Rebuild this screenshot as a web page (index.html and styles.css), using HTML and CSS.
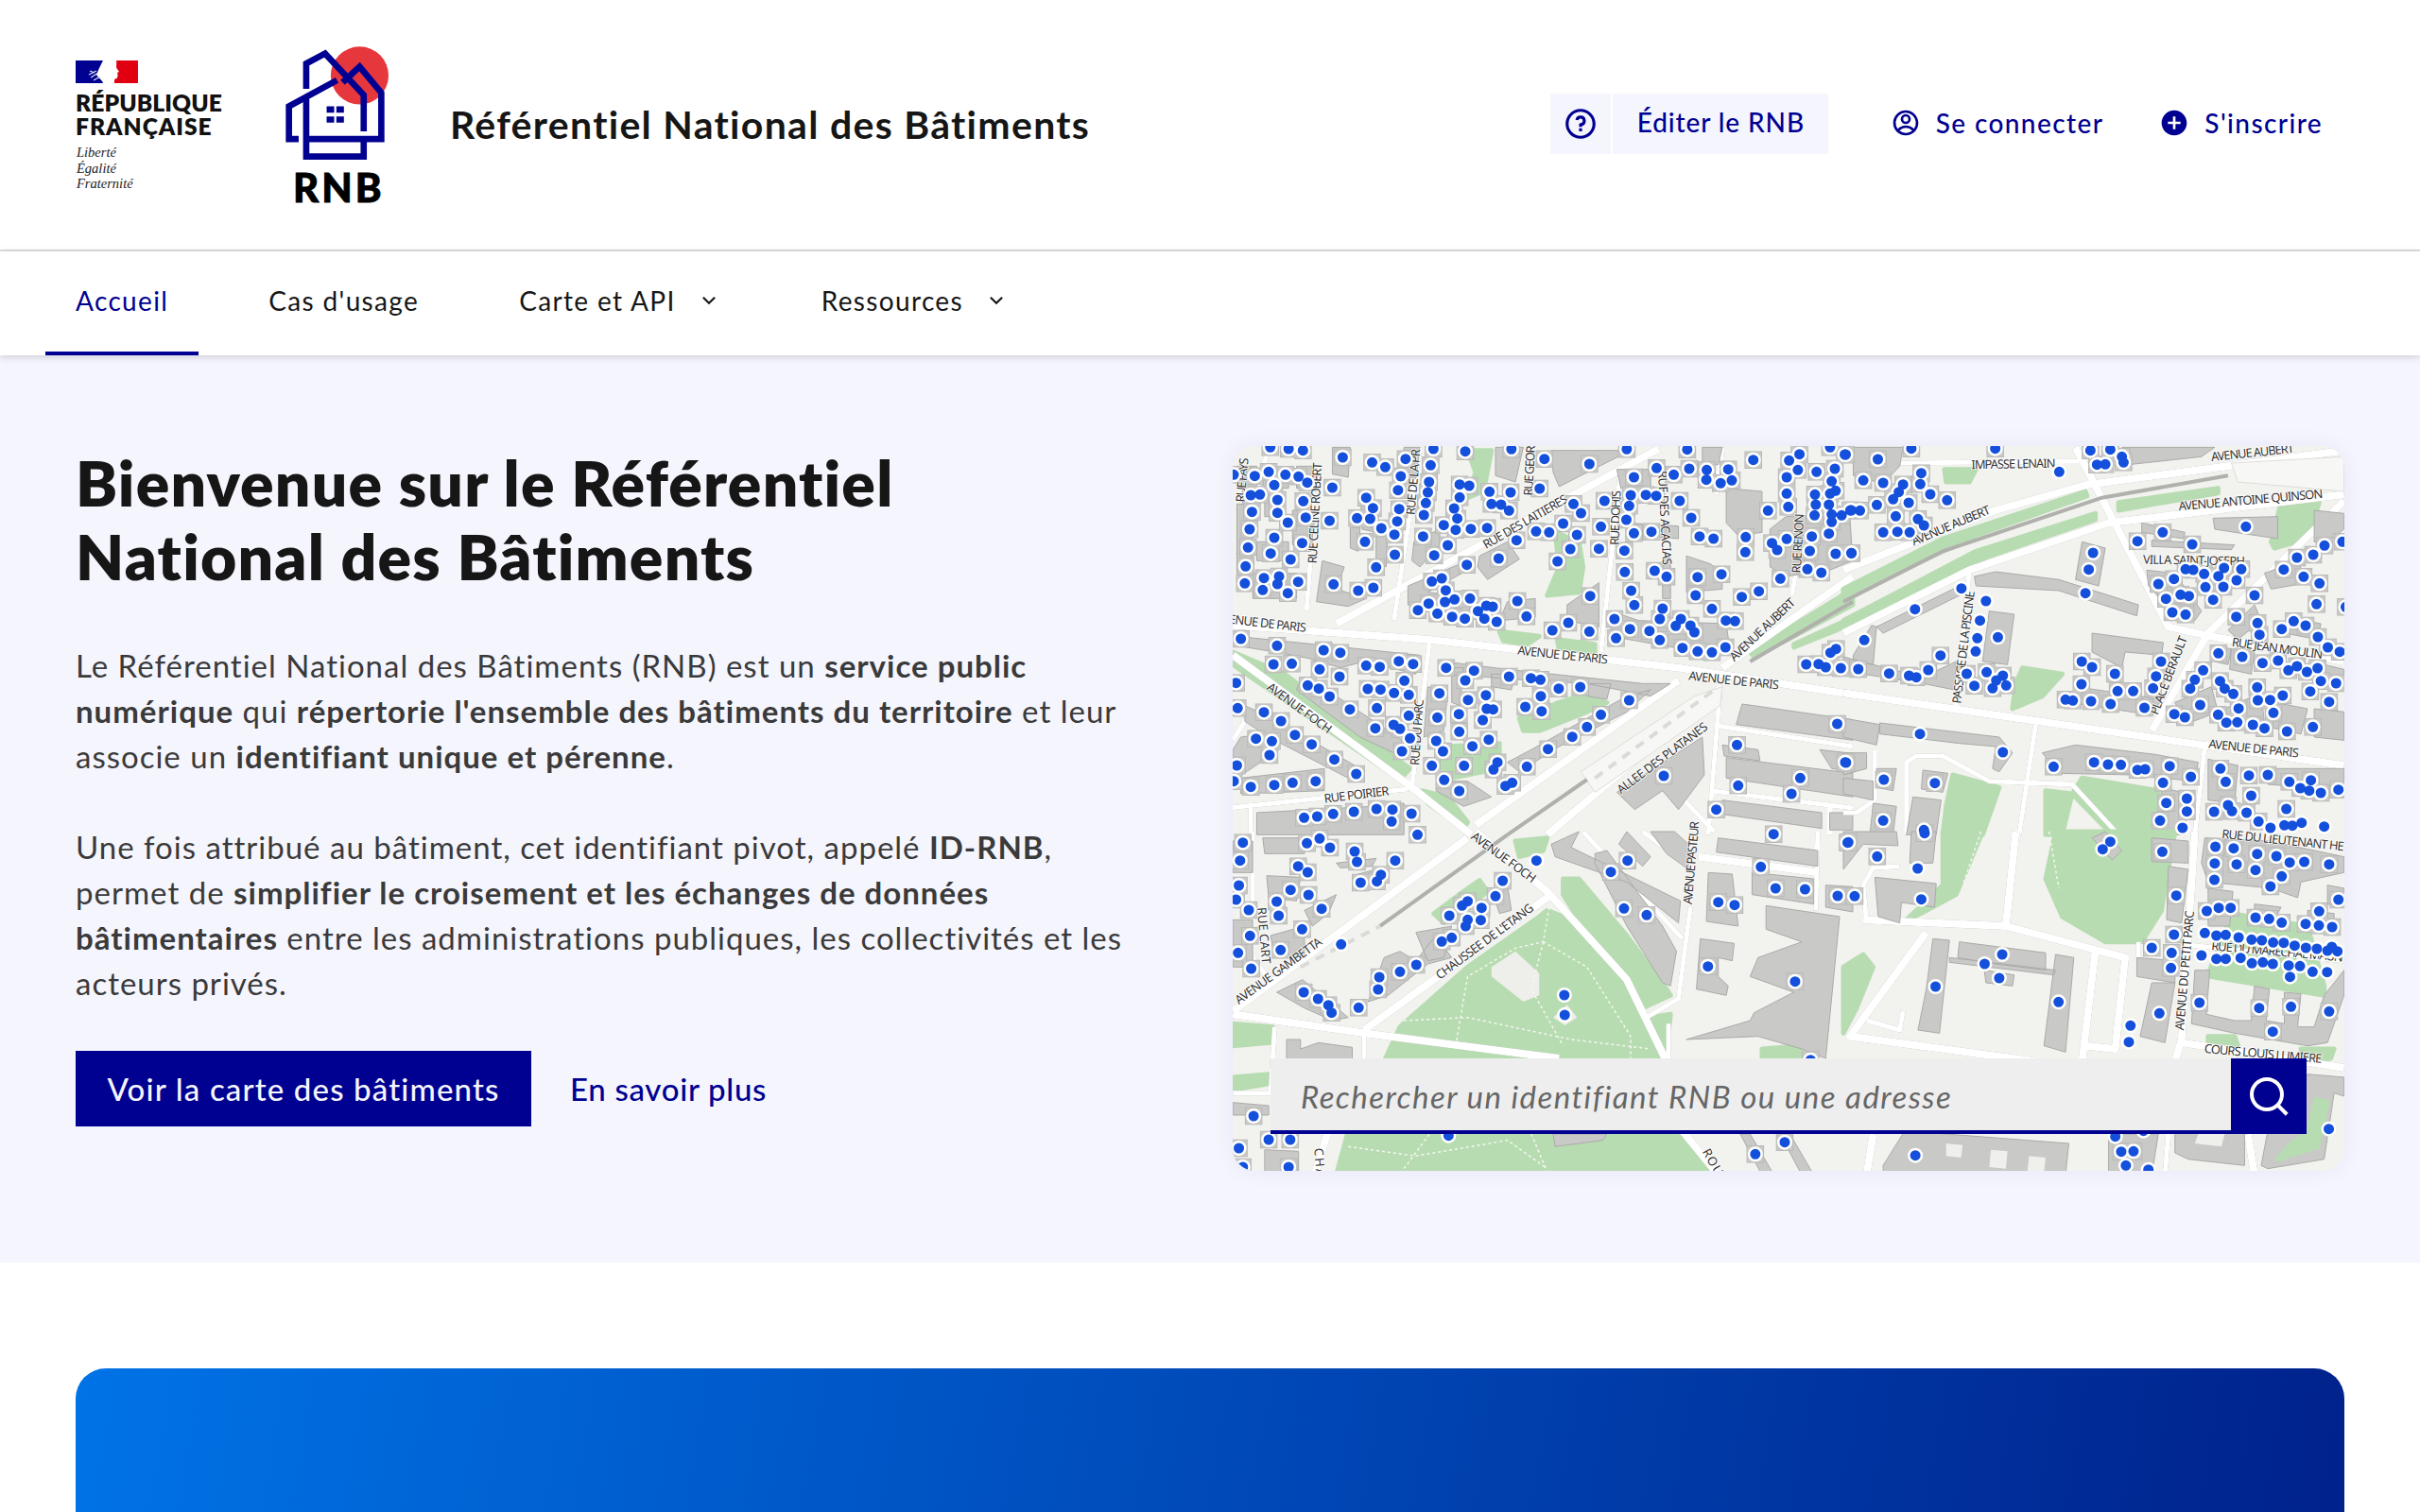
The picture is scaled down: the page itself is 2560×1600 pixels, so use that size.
FILE: index.html
```html
<!DOCTYPE html>
<html lang="fr">
<head>
<meta charset="utf-8">
<title>Référentiel National des Bâtiments</title>
<link rel="stylesheet" href="styles.css">
</head>
<body>
<header class="site-header">
  <div class="brand">
    <div class="republic">
      <svg class="flag" viewBox="0 0 66 24" width="66" height="24" aria-hidden="true">
        <rect width="66" height="24" fill="#fff"/>
        <rect width="29" height="24" fill="#000091"/>
        <rect x="41" width="25" height="24" fill="#e1000f"/>
        <path d="M29 0H43C44 4 42 6 44 9L46 12L44 13C45 16 45 19 41 20C38 21 37 22 36 24H29C28 20 24 19 22 15L25 8Z" fill="#fff"/>
        <path d="M14 15L22 11M16 18L24 13M19 21L26 17M15 11L20 13" stroke="#dfe0f5" stroke-width="1.2" fill="none"/>
      </svg>
      <p class="rf-name">RÉPUBLIQUE<br><span class="rf-second">FRANÇAISE</span></p>
      <p class="rf-motto">Liberté<br>Égalité<br>Fraternité</p>
    </div>
    <div class="rnb">
      <svg class="rnb-mark" viewBox="750 55 340 365" width="113" height="122" aria-hidden="true">
        <circle cx="992" cy="150" r="92" fill="#e5373c"/>
        <g fill="none" stroke="#000091" stroke-width="20" stroke-linejoin="miter">
          <path d="M822 192V112L882 80L1005 212V328"/>
          <path d="M920 165L767 248V352H798"/>
          <path d="M938 172L992 122L1061 205V352H822"/>
          <path d="M822 225V408H1005V352"/>
        </g>
        <path d="M887 248h24v20h-24zM918 248h24v20h-24zM887 280h24v20h-24zM918 280h24v20h-24z" fill="#000091"/>
      </svg>
      <span class="rnb-word">RNB</span>
    </div>
    <p class="site-title">Référentiel National des Bâtiments</p>
  </div>
  <div class="tools">
    <a class="edit"><span class="edit-icon"><svg class="ico-lg" viewBox="0 0 24 24"><path d="M12 22C6.477 22 2 17.523 2 12S6.477 2 12 2s10 4.477 10 10-4.477 10-10 10zm0-2a8 8 0 1 0 0-16 8 8 0 0 0 0 16zm-1-5h2v2h-2v-2zm2-1.645V14h-2v-1.5a1 1 0 0 1 1-1 1.5 1.5 0 1 0-1.471-1.794l-1.962-.393A3.501 3.501 0 1 1 13 13.355z"/></svg></span><span class="edit-text">Éditer le RNB</span></a>
    <a class="tool login"><svg class="ico" viewBox="0 0 24 24"><path d="M12 22C6.477 22 2 17.523 2 12S6.477 2 12 2s10 4.477 10 10-4.477 10-10 10zm-4.987-3.744A7.966 7.966 0 0 0 12 20c1.97 0 3.773-.712 5.167-1.892A6.979 6.979 0 0 0 12.16 16a6.981 6.981 0 0 0-5.147 2.256zM5.616 16.82A8.975 8.975 0 0 1 12.16 14a8.972 8.972 0 0 1 6.362 2.634 8 8 0 1 0-12.906.187zM12 13a4 4 0 1 1 0-8 4 4 0 0 1 0 8zm0-2a2 2 0 1 0 0-4 2 2 0 0 0 0 4z"/></svg>Se connecter</a>
    <a class="tool signup"><svg class="ico" viewBox="0 0 24 24"><path d="M12 22C6.477 22 2 17.523 2 12S6.477 2 12 2s10 4.477 10 10-4.477 10-10 10zm-1-11H7v2h4v4h2v-4h4v-2h-4V7h-2v4z"/></svg>S'inscrire</a>
  </div>
</header>
<nav class="main-nav">
  <a class="nav-item active">Accueil</a>
  <a class="nav-item">Cas d'usage</a>
  <a class="nav-item">Carte et API<svg class="chev" viewBox="0 0 24 24"><path d="M12 13.172l4.95-4.95 1.414 1.414L12 16 5.636 9.636 7.05 8.222z"/></svg></a>
  <a class="nav-item">Ressources<svg class="chev" viewBox="0 0 24 24"><path d="M12 13.172l4.95-4.95 1.414 1.414L12 16 5.636 9.636 7.05 8.222z"/></svg></a>
</nav>
<main>
<section class="hero">
  <div class="hero-text">
    <h1>Bienvenue sur le Référentiel<br>National des Bâtiments</h1>
    <p>Le Référentiel National des Bâtiments (RNB) est un <b>service public<br>numérique</b> qui <b>répertorie l'ensemble des bâtiments du territoire</b> et leur<br>associe un <b>identifiant unique et pérenne</b>.</p>
    <p>Une fois attribué au bâtiment, cet identifiant pivot, appelé <b>ID-RNB</b>,<br>permet de <b>simplifier le croisement et les échanges de données<br>bâtimentaires</b> entre les administrations publiques, les collectivités et les<br>acteurs privés.</p>
    <div class="cta">
      <a class="btn">Voir la carte des bâtiments</a>
      <a class="more">En savoir plus</a>
    </div>
  </div>
  <div class="map">
    <svg class="map-svg" viewBox="0 0 1176 767" width="1176" height="767" aria-hidden="false">
      <defs>
        <path id="da" class="nss" d="M104 40h.1M150 45h.1M186 50h.1M286 72h.1M360 88h.1M393 103h.1M444 77h.1M514 45h.1M507 97h.1M594 53h.1M710 46h.1M793 77h.1M906 93h.1M1000 46h.1M1152 47h.1M1075 106h.1M1118 127h.1M1157 108h.1M1201 112h.1M1255 110h.1M1318 80h.1M1434 62h.1M1408 82h.1M1548 63h.1M1511 40h.1M1430 112h.1M1477 118h.1M1523 108h.1M1402 135h.1M1515 148h.1M12 127h.1M65 131h.1M100 118h.1M142 127h.1M175 133h.1M197 152h.1M114 160h.1M260 168h.1M432 132h.1M503 150h.1M425 176h.1M500 183h.1M580 158h.1M604 162h.1M655 181h.1M708 183h.1M781 171h.1M1018 135h.1M1200 143h.1M1236 154h.1M1264 145h.1M55 192h.1M78 190h.1M122 207h.1M187 211h.1M345 200h.1M495 217h.1M580 199h.1M660 220h.1M684 222h.1M704 241h.1M866 220h.1M944 210h.1M1010 192h.1M1048 191h.1M1074 194h.1M1133 210h.1M1006 226h.1M1402 187h.1M1473 190h.1M1511 187h.1M1525 178h.1M58 245h.1M122 248h.1M362 233h.1M428 236h.1M566 234h.1M885 249h.1M1162 264h.1M1355 241h.1M1406 229h.1M1475 222h.1M1508 222h.1M1562 240h.1M1472 256h.1M1515 253h.1M1540 256h.1M148 279h.1M193 263h.1M253 273h.1M322 265h.1M355 267h.1M423 275h.1M490 255h.1M574 266h.1M999 270h.1M1515 277h.1M52 300h.1M383 297h.1M416 317h.1M540 287h.1M570 302h.1M608 299h.1M649 296h.1M772 307h.1M805 310h.1M840 282h.1M935 292h.1M1018 313h.1M1062 308h.1M1183 323h.1M1218 330h.1M1299 325h.1M1465 323h.1M1402 331h.1M1508 314h.1M114 327h.1M488 323h.1M723 335h.1M875 318h.1M1365 344h.1M184 344h.1M342 340h.1M550 351h.1M48 358h.1M858 363h.1M930 362h.1M994 368h.1M1298 373h.1M1378 366h.1M1460 369h.1M1525 378h.1M1565 376h.1M105 377h.1M417 381h.1M516 383h.1M155 396h.1M678 393h.1M826 402h.1M598 413h.1M1454 427h.1M1489 438h.1M42 418h.1M370 421h.1M995 436h.1M1070 432h.1M1100 451h.1M1178 452h.1M1238 443h.1M1386 457h.1M88 455h.1M126 450h.1M174 467h.1M40 472h.1M122 474h.1M510 466h.1M535 456h.1M263 475h.1M85 493h.1M148 503h.1M325 495h.1M363 486h.1M545 494h.1M1011 495h.1M1332 497h.1M1173 510h.1M1289 515h.1M908 512h.1M502 536h.1M543 531h.1M567 523h.1M606 520h.1M647 543h.1M663 546h.1M725 528h.1M1019 541h.1M1090 552h.1M1214 553h.1M475 557h.1M524 568h.1M561 578h.1M593 584h.1M626 560h.1M642 584h.1M673 594h.1M748 577h.1M853 597h.1M813 621h.1M906 625h.1M969 585h.1M1008 617h.1M1057 623h.1M1083 652h.1M1083 585h.1M1123 607h.1M1136 585h.1M1160 606h.1M1170 627h.1M1249 590h.1M1272 592h.1M973 646h.1M1140 677h.1M1178 688h.1M1214 691h.1M1248 675h.1M30 648h.1M121 670h.1M238 684h.1M280 692h.1M1512 692h.1M1526 680h.1M112 729h.1M158 727h.1M345 733h.1M379 737h.1M427 719h.1M463 728h.1M546 740h.1M616 749h.1M228 745h.1M1451 729h.1M1482 728h.1M1500 738h.1M1538 741h.1M18 788h.1M278 768h.1M198 796h.1M226 806h.1M253 831h.1M441 781h.1M594 780h.1M704 768h.1M759 773h.1M783 778h.1M883 801h.1M829 806h.1M349 807h.1M381 809h.1M415 820h.1M452 826h.1M529 821h.1M646 827h.1M784 830h.1M601 842h.1M1006 843h.1M22 868h.1M88 881h.1M304 872h.1M372 868h.1M131 909h.1M452 892h.1M524 898h.1M578 887h.1M648 870h.1M664 872h.1M745 864h.1M786 878h.1M638 906h.1M935 889h.1M1529 918h.1M368 932h.1M414 921h.1M430 934h.1M166 953h.1M579 943h.1M900 928h.1M863 959h.1M68 965h.1M108 973h.1M455 964h.1M521 972h.1M653 968h.1M208 983h.1M612 989h.1M1277 985h.1M802 998h.1M102 1017h.1M538 1005h.1M435 1005h.1M265 1031h.1M20 1050h.1M675 1040h.1M510 1051h.1M591 1051h.1M665 1063h.1M749 1054h.1M1549 1040h.1M1436 1090h.1M1093 1083h.1M320 1077h.1M12 1100h.1M55 1118h.1M114 1112h.1M160 1105h.1M218 1100h.1M541 1096h.1M712 1105h.1M695 1115h.1M579 1131h.1M1280 1114h.1M1414 1140h.1M1225 1190h.1M189 1216h.1M222 1212h.1M262 1204h.1M314 1197h.1M371 1188h.1M411 1190h.1M459 1203h.1M409 1228h.1"/>
        <path id="dc" class="nss" d="M35 35h.1M196 37h.1M228 22h.1M254 51h.1M474 10h.1M316 63h.1M322 96h.1M418 92h.1M28 92h.1M174 110h.1M198 129h.1M1002 92h.1M960 128h.1M1369 8h.1M1337 112h.1M1555 35h.1M382 137h.1M372 158h.1M331 162h.1M25 171h.1M155 185h.1M200 201h.1M688 156h.1M670 205h.1M1374 180h.1M1448 183h.1M1530 204h.1M1230 224h.1M1271 233h.1M18 216h.1M120 222h.1M50 249h.1M125 267h.1M233 245h.1M600 221h.1M586 235h.1M635 242h.1M554 267h.1M993 244h.1M1050 265h.1M600 280h.1M633 281h.1M595 300h.1M184 310h.1M53 331h.1M560 337h.1M535 349h.1M130 376h.1M23 385h.1M471 423h.1M430 445h.1M378 462h.1M56 435h.1M1204 428h.1M1423 476h.1M188 510h.1M375 501h.1M224 531h.1M250 551h.1M258 575h.1M326 559h.1M62 903h.1M1462 725h.1M100 978h.1M154 978h.1M25 1005h.1M150 1065h.1M1397 986h.1M1323 1024h.1M35 1065h.1"/>
        <path id="dc2" class="nss" d="M843 519h.1M844 582h.1M773 92h.1M282 358h.1M552 965h.1"/>
        <path id="db" class="nss" d="M7 63h.1M205 44h.1M458 44h.1M745 50h.1M805 47h.1M104 78h.1M840 70h.1M845 88h.1M790 94h.1M765 95h.1M235 122h.1M60 145h.1M120 153h.1M180 158h.1M232 157h.1M167 182h.1M262 189h.1M150 205h.1M197 216h.1M313 208h.1M101 223h.1M24 240h.1M50 241h.1M158 259h.1M225 268h.1M243 288h.1M120 310h.1M163 308h.1M200 310h.1M24 376h.1M963 310h.1M887 338h.1M1052 348h.1M1505 340h.1M1451 352h.1M1417 381h.1M1368 390h.1M1328 428h.1M1388 451h.1M1436 472h.1M1032 427h.1M1055 429h.1M1088 442h.1M1131 449h.1M1148 423h.1M1200 427h.1M1186 462h.1M950 474h.1M997 458h.1M1092 484h.1M1146 483h.1M1240 510h.1M1017 508h.1M1042 512h.1M973 521h.1M1115 524h.1M992 564h.1M1032 571h.1M1185 578h.1M1427 538h.1M1515 547h.1M1249 598h.1M1358 592h.1M1394 606h.1M1322 617h.1M1255 635h.1M1431 642h.1M293 701h.1M1461 675h.1M1497 689h.1M1131 694h.1M1203 705h.1M1311 717h.1M1264 725h.1M719 720h.1M958 720h.1M750 738h.1M45 744h.1M1430 741h.1M1368 735h.1M1342 748h.1M1398 753h.1M138 758h.1M256 747h.1M198 765h.1M220 770h.1M372 759h.1M432 754h.1M481 765h.1M461 780h.1M491 796h.1M395 797h.1M450 805h.1M819 759h.1M943 767h.1M1085 748h.1M1060 778h.1M1136 782h.1M1440 782h.1M1486 789h.1M718 792h.1M827 814h.1M874 814h.1M934 805h.1M1046 806h.1M1150 806h.1M1176 823h.1M1248 802h.1M1408 815h.1M1325 828h.1M1250 843h.1M1287 842h.1M1465 848h.1M670 841h.1M692 844h.1M747 846h.1M806 855h.1M908 867h.1M1076 858h.1M1192 869h.1M1297 883h.1M998 887h.1M1030 897h.1M1130 889h.1M1155 914h.1M1188 913h.1M1235 921h.1M1270 932h.1M1338 942h.1M1416 928h.1M8 1041h.1M634 1054h.1M756 1040h.1M798 1047h.1M837 1048h.1M887 1064h.1M910 1062h.1M984 1052h.1M1137 1060h.1M1048 1086h.1M1153 1102h.1M1223 1082h.1M1280 1080h.1M1345 1102h.1M1378 1122h.1M1410 1097h.1M1405 1130h.1M1440 1137h.1M1493 1127h.1M122 1095h.1M964 1105h.1M276 1106h.1M1230 1146h.1M974 1169h.1M1036 1155h.1M1160 1176h.1M1336 1188h.1M120 1225h.1M1036 1196h.1M1118 1197h.1M1172 1195h.1M1216 1200h.1M955 1225h.1M1252 1228h.1"/>
        <path id="db2" class="nss" d="M651 118h.1M1214 292h.1M753 375h.1M740 428h.1M356 488h.1M430 528h.1M730 503h.1M216 554h.1M412 590h.1M63 652h.1M404 646h.1M466 643h.1M399 688h.1M231 950h.1M481 1008h.1M243 1255h.1M1023 1248h.1M1288 1248h.1M1330 1240h.1M1354 1241h.1M1382 1232h.1M1450 1244h.1"/>
        <path id="dd" class="nss" d="M15 34h.1M245 5h.1M102 79h.1M962 64h.1M1122 48h.1M1177 53h.1M1248 71h.1M1306 78h.1M1120 101h.1M1186 104h.1M1346 98h.1M1390 96h.1M1465 104h.1M1243 122h.1M1119 153h.1M1322 142h.1M1288 174h.1M34 205h.1M1004 203h.1M1493 216h.1M1096 252h.1M1132 242h.1M1168 242h.1M1435 253h.1M1243 273h.1M1284 277h.1M1322 289h.1M1394 293h.1M1434 298h.1M1474 303h.1M997 327h.1M930 369h.1M990 385h.1M988 433h.1M1074 543h.1M1254 560h.1M1350 556h.1M1465 571h.1M1295 635h.1M838 1016h.1M875 1015h.1"/>
        <path id="dd2" class="nss" d="M805 32h.1M782 56h.1M224 117h.1M235 215h.1M1090 322h.1M1125 330h.1M1153 328h.1M1192 336h.1M1231 343h.1M1262 345h.1M1296 352h.1M1328 353h.1M1361 362h.1M1395 369h.1M1428 372h.1M1460 378h.1M1473 366h.1M1490 380h.1M479 390h.1M426 420h.1M1080 393h.1M1125 404h.1M1153 404h.1M1198 401h.1M1232 418h.1M1265 415h.1M1295 420h.1M1343 425h.1M1377 427h.1M1415 445h.1M1459 446h.1M470 465h.1M1347 461h.1M278 492h.1M649 541h.1M953 577h.1M866 616h.1M861 668h.1M1464 944h.1M820 968h.1M905 950h.1M217 1028h.1M852 1060h.1M920 1073h.1"/>
      </defs>

      <rect class="map-land" width="1176" height="767"/>

      <g transform="translate(-4,-12) scale(.42088,.33333)">
        <path class="green" d="M820 310L880 340L890 420L880 500L800 510L830 420ZM680 625L780 640L750 665L690 655ZM825 650L920 665L920 690L830 680ZM600 50H660L640 180L600 200L620 120ZM730 900L830 850L880 830L950 850L900 880L780 940L740 940ZM550 990L680 980L680 1060L560 1090L530 1050ZM485 1130L550 1150L600 1230L590 1250L500 1170ZM10 690V730L430 1095L455 1060L140 760ZM1310 690L1568 490V540L1420 640L1320 705ZM1420 665L1568 580V600L1420 675Z"/>
        <g class="roads">
          <path class="road-major" d="M10 605L500 650L1130 740L1568 825M270 600L640 345L1080 45M10 700L450 1110L610 1270M1240 740L1568 450M1130 780L620 1240M1240 800L800 1270"/>
          <path class="road-minor" d="M205 400L195 560M480 40L415 590M505 650L460 1120M985 110L935 690M1240 40L1225 190M1450 250L1415 510M1235 800L1205 1270M1230 925L1568 990M1210 1130L1568 1185M0 1185L450 1125M60 870L10 970M55 1170V1270M1090 1090L1220 1260M1510 1180V1270M100 40L20 400"/>
        </g>
        <path class="plaza" d="M885 1070L1170 830L1240 800L1235 860L920 1135Z"/>
        <path class="rail-dash" d="M920 1090L1220 810"/>
        <path class="rail" d="M700 1270L900 1095M1310 720L1568 530"/>
        <path class="bld" d="M235 400L290 420L270 490L345 520L300 545L220 530ZM260 40H305L300 135L260 125ZM330 180L365 190L355 295L400 300L395 420L370 400L370 310L335 300ZM305 295H330L325 370L305 360ZM440 40H480L470 140L435 130ZM465 340L530 300L530 350L480 420L460 400ZM670 40H740L720 150L670 130ZM810 50H1010L900 120L830 165L815 120ZM630 385L700 340L730 395L650 460L625 420ZM450 480L600 400L600 430L500 500L620 520L630 590L450 540ZM700 530L770 520L770 580L680 590ZM850 540L930 470L930 610L850 590ZM960 560L1030 590L1250 600L1260 690L1140 680L960 640ZM975 110H1060V170H985ZM1000 280L1130 290V330L1000 320ZM1150 385L1210 410L1240 440V490L1150 500ZM1090 390H1110V520H1090ZM1190 40H1240L1230 95H1190ZM1250 170L1340 180V310L1280 320L1250 280ZM1360 300L1400 260L1560 250L1568 400L1510 430L1400 450L1360 420ZM20 100H70V170H20ZM85 130H150V170H85ZM20 220H60V440H20ZM90 200H140V260H90ZM70 340H150V400H70ZM60 440H170V520H60ZM170 100H210V170H170ZM160 240H210V350H160ZM20 640L480 700L470 760L340 720L280 740L200 710L140 695L20 670ZM540 720L700 745L1040 790L1110 790L1060 830L900 790L760 780L540 760ZM660 760L720 760L710 810L660 800ZM900 790L960 790L950 840L900 830ZM700 1040L760 1000L830 950L1000 830L1060 810L1000 880L830 990L730 1070ZM560 740H590L580 860L560 850ZM500 800L550 820L540 940L490 960ZM180 780L270 830L460 990L430 1020L330 960L170 810ZM40 860L110 900L330 1060L300 1090L100 960L40 910ZM30 960L90 950L80 1040L20 1090H10V1000ZM30 1090L240 1060V1130L30 1140ZM530 1100H600L660 1150L590 1180L520 1130ZM1290 855L1568 905V970L1275 920ZM1250 1025L1568 1075V1150L1250 1090ZM1485 1000L1568 1012V1070L1515 1060ZM1240 1160L1490 1200V1250L1240 1205ZM975 1135L1190 960L1195 1080L1130 1190L1090 1130L1020 1190ZM1240 985L1330 1000L1335 1035L1245 1020ZM1510 1200H1568V1255H1510ZM70 1200L360 1180L440 1170V1270H70Z"/>
      </g>

      <g transform="translate(646,-12) scale(.35077,.33333)">
        <path class="green" d="M0 490L300 330L730 180L735 195L400 320L0 520ZM0 590L400 370L760 250V270L430 390L0 610ZM830 215L1130 170V185L830 240ZM540 740L660 760L600 830L510 870L520 790ZM305 110H400L380 150H310ZM1320 215H1435L1400 330L1300 360L1290 340ZM330 1080L470 1120L420 1270H300L310 1180ZM720 1090L950 1130V1270H810L690 1140ZM610 1130L690 1140L660 1270H610Z"/>
        <g class="roads">
          <path class="road-major" d="M0 430L460 240L730 160L1510 50M0 630L380 430L800 280L1510 190M700 40L980 610L1110 640L1510 720M1510 210L1100 630L930 940M0 820L1510 1050"/>
          <path class="road-minor" d="M170 90L710 85M580 920L530 1270M190 1270V1040L220 1020H300L440 1100L690 1110L830 1270M95 1000V1160L40 1200H0M1090 990L1060 1270M380 430L340 860"/>
        </g>
        <path class="plaza" d="M1170 90L1510 70V180L1190 150Z"/>
        <path class="rail" d="M0 530L300 370L780 200L1160 130"/>
        <path class="bld" d="M395 450L460 435L650 460L890 540L885 575L650 495L400 480ZM100 610L350 480L370 500L120 630ZM30 700L85 605L100 610L90 730L30 720ZM420 720L440 560L515 570L495 730ZM0 705L90 730L240 770L340 720L335 810L240 790L0 750ZM720 340L790 360L770 480L700 460ZM750 630L965 660L960 700L850 690L840 740L750 690ZM700 800L960 840L930 890L680 850ZM840 40H1120L1080 70L860 95ZM30 40H180L170 100L120 155L30 130ZM1115 265L1310 260V330L1180 310L1120 300ZM900 280L1030 310L1025 330L900 310ZM930 335L1180 350L1170 365L930 355ZM915 430L1000 440L1080 560L1060 590L990 560L920 480ZM110 915L470 960L510 1010L470 1070L450 1060L460 990L350 980L110 950ZM0 900L110 920L100 985L0 960ZM600 1010L700 985L940 1015L1070 1040L1060 1100L870 1080L650 1075ZM0 1010H70V1060L0 1080ZM0 1090L90 1100V1160L0 1140ZM100 1060L160 1060L150 1130L100 1120ZM240 1065L315 1075L300 1135L235 1125ZM210 1150L295 1160L280 1270H190ZM90 1170L160 1180L150 1270H80ZM1120 670L1170 680L1160 730L1120 720ZM1170 680L1240 690L1230 760L1165 745ZM1340 580L1440 600L1430 650L1330 630ZM1000 850L1110 800L1130 880L1030 920ZM1150 870L1260 820L1270 920L1160 920ZM1300 850L1400 870L1380 950L1290 930ZM1420 870L1510 880V970L1420 960ZM1450 730L1510 745V810L1450 800ZM1420 240L1510 250V300L1450 350L1420 340ZM1270 440L1370 400L1400 470L1290 490ZM1160 620L1240 540L1260 590L1190 650ZM1100 1030L1190 1050L1180 1170L1100 1160ZM1280 1060H1510V1130L1280 1110ZM960 1120L1040 1140L1030 1270H960Z"/>
      </g>

      <g transform="translate(-4,408) scale(.42088,.33333)">
        <path class="green" d="M800 250L880 290L950 400L1050 600L1090 730L390 730L430 620L600 430L780 270ZM840 150H880L1000 330L1100 500L1110 520L1040 560L900 320L840 200ZM270 1090L300 950H1130L1230 1090ZM515 260L590 190L630 155L650 190L600 240L540 290ZM10 610L110 620L105 670L10 680ZM10 780L100 770V800L10 820ZM1060 590L1110 580L1100 700L1070 660ZM1340 690L1440 680V730H1340ZM720 30L800 20L790 60L730 80Z"/>
        <path class="patch" d="M660 430L720 380L780 450V520L740 540L660 460ZM815 590L850 550L875 590L845 615Z"/>
        <path class="trail" d="M805 240L790 350L720 370L600 460L570 680M790 350L900 430L1010 650L1010 720M790 350L760 500L840 680M440 600L600 590L860 660L1060 690M300 1000L470 1030L700 980L800 1070M440 1070L510 950M760 960L800 1080"/>
        <g class="roads">
          <path class="road-major" d="M10 580L340 640L830 720M340 630L810 200M10 570L600 20M620 0L800 190L1000 470L1100 730M215 1090L250 950M1140 950L1230 1090M1180 80L1480 130"/>
          <path class="road-minor" d="M340 640V730M890 0L1140 340M1040 0L1170 120M1160 240L1130 530L1050 590M60 0V400L95 460M115 620L105 830M10 830H105M1105 610V730M1480 0L1475 250"/>
        </g>
        <path class="rail" d="M380 300L700 10"/>
        <path class="rail-dash" d="M180 430L380 300"/>
        <path class="bld" d="M1350 235L1535 270L1500 720L1440 690L1330 650L1150 660L1310 600L1320 575L1420 510L1310 460L1330 400L1440 350L1350 310ZM1185 340L1270 355L1265 410L1230 400V460L1255 490L1250 520L1175 500ZM1205 130L1265 135L1280 300L1200 285ZM1315 130L1470 150V230L1315 200ZM1230 20L1480 60V110L1225 65ZM810 40L880 0L860 50L1135 220L1130 290L1000 160L820 80ZM920 70L950 60L1090 300L1125 380L1110 490L1090 480L1000 300L920 100ZM1500 170L1568 175V255L1500 240ZM95 140L180 145L170 220L100 210ZM120 510L185 470L300 590L260 600L190 560ZM270 100L370 85L360 110L280 115ZM310 140L370 120L360 170L320 180ZM190 250L270 200L250 260L210 300ZM105 330L190 300V390L115 400ZM350 540L390 400L430 380L470 410L520 330L560 400L500 420L400 520ZM470 320L560 300L540 400L500 410ZM660 180L700 170L710 250L680 260ZM10 30H60V130H10ZM10 280H60V430H10ZM85 20H190V70H90ZM145 660H180V690L225 670L310 685V730H145ZM10 860L100 870V900H10ZM90 1010L175 1015V1090H90ZM815 960H950L940 980L820 1000ZM1285 960H1310L1370 1090H1340ZM1385 960H1410L1470 1090H1440ZM1000 0L1060 80L1040 110L980 40ZM1060 0H1120L1155 40V120L1100 70Z"/>
      </g>

      <g transform="translate(646,408) scale(.35077,.33333)">
        <path class="green" d="M640 0H1000L975 150L960 250L900 350L790 350L660 270L610 150ZM300 0H420L340 200L180 290L300 170ZM0 430L60 390L90 430L40 560L0 640ZM1170 260L1400 300L1450 490V520L1105 460V440ZM1100 650H1180L1190 680H1100ZM1380 690H1480L1470 720L1390 730Z"/>
        <path class="trail" d="M415 0L360 170M620 0L650 180"/>
        <g class="roads">
          <path class="road-major" d="M520 0L490 300M60 280L490 300L850 400L820 690L730 680M760 380L720 730M250 320L20 650L580 730M1060 0L1020 660L1000 730M1020 670L1510 750M1220 960L1240 1090M90 960L70 1090"/>
          <path class="road-minor" d="M70 290L60 170L90 115L170 110M180 570L170 630L70 600M980 960L970 1090M890 350V400M1040 360L1510 410"/>
        </g>
        <path class="bld" d="M270 340L320 345L290 640L225 630L250 500ZM350 350L610 385V440L460 420L345 400ZM320 400L640 440L635 455L320 415ZM640 390L695 400L670 700L605 680ZM425 440L515 455L510 490L430 480ZM95 145L280 165L275 240L175 225L170 290L105 270ZM0 0H160L165 45L60 40L0 120ZM205 0H280L270 100H200ZM930 20L1040 30V100L930 95ZM980 110L1040 120L1020 290L975 280ZM930 480H1000L970 670L895 650ZM885 400L1000 410V480L885 460ZM1060 440H1105L1095 580L1180 600H1230L1240 490L1285 500L1275 600L1330 610V510L1380 515L1370 620H1420L1450 520L1510 440V520L1460 670L1400 680L1180 640L1050 610ZM1090 20L1280 30L1420 60L1510 80V130L1380 160L1370 210L1290 180L1100 160L1080 100ZM1100 180L1175 190L1165 300H1100ZM1460 170L1510 180V240L1460 230ZM1240 230L1320 240L1300 280L1240 270ZM1400 250L1480 260V310H1400ZM750 20L790 0L840 60L810 90ZM120 1060L185 950L680 990L670 1090H120ZM1000 950H1210V1060L1040 1040L1000 1020ZM1260 1060L1280 950L1400 770L1510 780V840L1480 830L1450 1040L1280 1070ZM800 960H950L930 1090H800Z"/>
        <path class="land-fill" d="M310 990L360 995L355 1035L310 1030ZM445 1010L495 1015L490 1070L440 1065ZM560 1030L610 1035L605 1085L555 1080ZM1070 960H1150L1140 1000L1060 990Z"/>
        <path class="green" d="M1425 850L1460 860L1430 1000L1310 1040L1350 990L1400 960Z"/>
      </g>

      <g class="under-edge">
        <use href="#da" transform="translate(-4,-12) scale(.42088,.33333)"/>
        <use href="#db" transform="translate(646,-12) scale(.35077,.33333)"/>
        <use href="#dc" transform="translate(-4,408) scale(.42088,.33333)"/>
        <use href="#dd" transform="translate(646,408) scale(.35077,.33333)"/>
      </g>
      <g class="under">
        <use href="#da" transform="translate(-4,-12) scale(.42088,.33333)"/>
        <use href="#db" transform="translate(646,-12) scale(.35077,.33333)"/>
        <use href="#dc" transform="translate(-4,408) scale(.42088,.33333)"/>
        <use href="#dd" transform="translate(646,408) scale(.35077,.33333)"/>
      </g>

      <g class="labels">
        <text x="11" y="36" textLength="47" transform="rotate(-85 11 36)">RUE FAYS</text>
        <text x="88" y="71" textLength="107" transform="rotate(-87 88 71)">RUE CELINE ROBERT</text>
        <text x="192" y="38" textLength="70" transform="rotate(-85 192 38)">RUE DE LA PR</text>
        <text x="315" y="26" textLength="53" transform="rotate(-87 315 26)">RUE GEOR</text>
        <text x="310" y="81" textLength="101" transform="rotate(-30 310 81)">RUE DES LAITIERES</text>
        <text x="406" y="76" textLength="58" transform="rotate(-88 406 76)">RUE DOHIS</text>
        <text x="456" y="76" textLength="100" transform="rotate(87 456 76)">RUE DES ACACIAS</text>
        <text x="599" y="103" textLength="63" transform="rotate(-87 599 103)">RUE RENON</text>
        <text x="30" y="188" textLength="96" transform="rotate(6.5 30 188)">AVENUE DE PARIS</text>
        <text x="349" y="222" textLength="96" transform="rotate(6 349 222)">AVENUE DE PARIS</text>
        <text x="530" y="249" textLength="96" transform="rotate(6 530 249)">AVENUE DE PARIS</text>
        <text x="561" y="195" textLength="90" transform="rotate(-43.5 561 195)">AVENUE AUBERT</text>
        <text x="70" y="278" textLength="81" transform="rotate(36 70 278)">AVENUE FOCH</text>
        <text x="196" y="303" textLength="70" transform="rotate(-86 196 303)">RUE DU PARC</text>
        <text x="455" y="331" textLength="116" transform="rotate(-37 455 331)">ALLEE DES PLATANES</text>
        <text x="131" y="370" textLength="69" transform="rotate(-7 131 370)">RUE POIRIER</text>
        <text x="486" y="441" textLength="88" transform="rotate(-85 486 441)">AVENUE PASTEUR</text>
        <text x="32" y="518" textLength="60" transform="rotate(85 32 518)">RUE CART</text>
        <text x="49" y="556" textLength="110" transform="rotate(-36 49 556)">AVENUE GAMBETTA</text>
        <text x="286" y="436" textLength="81" transform="rotate(36 286 436)">AVENUE FOCH</text>
        <text x="267" y="525" textLength="125" transform="rotate(-36.6 267 525)">CHAUSSEE DE L'ETANG</text>
        <text x="91" y="758" textLength="30" transform="rotate(85 91 758)">CHA</text>
        <text x="507" y="758" textLength="30" transform="rotate(60 507 758)">ROU</text>
        <text x="826" y="20" textLength="89" transform="rotate(-1 826 20)">IMPASSE LENAIN</text>
        <text x="1079" y="8" textLength="88" transform="rotate(-6 1079 8)">AVENUE AUBERT</text>
        <text x="1077" y="58" textLength="153" transform="rotate(-5 1077 58)">AVENUE ANTOINE QUINSON</text>
        <text x="760" y="85" textLength="89" transform="rotate(-23 760 85)">AVENUE AUBERT</text>
        <text x="1017" y="122" textLength="108" transform="rotate(1 1017 122)">VILLA SAINT-JOSEPH</text>
        <text x="774" y="213" textLength="120" transform="rotate(-83 774 213)">PASSAGE DE LA PISCINE</text>
        <text x="991" y="243" textLength="88" transform="rotate(-69 991 243)">PLACE BERAULT</text>
        <text x="1105" y="215" textLength="97" transform="rotate(8 1105 215)">RUE JEAN MOULIN</text>
        <text x="1080" y="321" textLength="96" transform="rotate(6 1080 321)">AVENUE DE PARIS</text>
        <text x="1111" y="418" textLength="130" transform="rotate(6 1111 418)">RUE DU LIEUTENANT HE</text>
        <text x="1105" y="536" textLength="140" transform="rotate(5 1105 536)">RUE DU MARECHAL MAUN</text>
        <text x="1008" y="555" textLength="127" transform="rotate(-85 1008 555)">AVENUE DU PETIT PARC</text>
        <text x="1090" y="644" textLength="125" transform="rotate(5 1090 644)">COURS LOUIS LUMIERE</text>
      </g>

      <g class="halo">
        <use href="#da" transform="translate(-4,-12) scale(.42088,.33333)"/>
        <use href="#db" transform="translate(646,-12) scale(.35077,.33333)"/>
        <use href="#db2" transform="translate(646,-12) scale(.35077,.33333)"/>
        <use href="#dc" transform="translate(-4,408) scale(.42088,.33333)"/>
        <use href="#dc2" transform="translate(-4,408) scale(.42088,.33333)"/>
        <use href="#dd" transform="translate(646,408) scale(.35077,.33333)"/>
        <use href="#dd2" transform="translate(646,408) scale(.35077,.33333)"/>
      </g>
      <g class="dot">
        <use href="#da" transform="translate(-4,-12) scale(.42088,.33333)"/>
        <use href="#db" transform="translate(646,-12) scale(.35077,.33333)"/>
        <use href="#db2" transform="translate(646,-12) scale(.35077,.33333)"/>
        <use href="#dc" transform="translate(-4,408) scale(.42088,.33333)"/>
        <use href="#dc2" transform="translate(-4,408) scale(.42088,.33333)"/>
        <use href="#dd" transform="translate(646,408) scale(.35077,.33333)"/>
        <use href="#dd2" transform="translate(646,408) scale(.35077,.33333)"/>
      </g>
    </svg>
    <form class="search">
      <input class="search-input" type="text" placeholder="Rechercher un identifiant RNB ou une adresse">
      <span class="search-btn"><svg class="search-ico" viewBox="0 0 24 24"><path d="M18.031 16.617l4.283 4.282-1.415 1.415-4.282-4.283A8.96 8.96 0 0 1 11 20c-4.968 0-9-4.032-9-9s4.032-9 9-9 9 4.032 9 9a8.96 8.96 0 0 1-1.969 5.617zm-2.006-.742A6.977 6.977 0 0 0 18 11c0-3.868-3.133-7-7-7-3.868 0-7 3.132-7 7 0 3.867 3.132 7 7 7a6.977 6.977 0 0 0 4.875-1.975l.15-.15z"/></svg></span>
    </form>
  </div>
</section>
<section class="band"><div class="band-card"></div></section>
</main>
</body>
</html>
```
FILE: styles.css
```css
* { box-sizing: border-box; }
html, body { margin: 0; height: 1600px; overflow: hidden; }
body { font-family: Lato, "Noto Sans", sans-serif; color: #161616; background: #fff; }
p { margin: 0; }
a { text-decoration: none; }

.site-header { height: 266px; display: flex; justify-content: space-between; padding: 0 80px; border-bottom: 2px solid #ddd; }
.brand { display: flex; align-items: flex-start; }
.republic { width: 220px; padding-top: 64px; }
.flag { display: block; }
.rf-name { font-size: 24.6px; line-height: 25px; font-weight: 800; color: #111; margin-top: 8px; letter-spacing: .1px; }
.rf-second { letter-spacing: 1px; }
.rf-motto { font-family: "Liberation Serif", serif; font-style: italic; font-size: 14.5px; line-height: 16.5px; margin: 7px 0 0 1px; color: #222; }
.rnb { width: 176px; padding-top: 48px; display: flex; flex-direction: column; }
.rnb-mark { display: block; }
.rnb-word { font-size: 42px; line-height: 42px; font-weight: 900; color: #000; margin: 7px 0 0 10px; letter-spacing: 3px; -webkit-text-stroke: .9px #000; }
.site-title { font-size: 41px; line-height: 48px; font-weight: 700; margin-top: 108px; letter-spacing: 1.3px; }

.tools { display: flex; align-items: center; color: #000091; height: 264px; }
.edit { display: flex; height: 64px; gap: 2px; color: #000091; margin-right: 66px; margin-top: -2px; }
.edit-icon { width: 64px; background: #f5f5fe; display: flex; align-items: center; justify-content: center; }
.edit-text { width: 228px; padding-left: 26px; background: #f5f5fe; font-size: 28px; font-weight: 500; line-height: 60px; letter-spacing: .9px; }
.ico-lg { width: 38px; height: 38px; fill: #000091; }
.ico { width: 32px; height: 32px; fill: #000091; flex: none; }
.tool { display: flex; align-items: center; gap: 16px; font-size: 28px; font-weight: 500; color: #000091; line-height: 64px; margin-top: -4px; letter-spacing: 1.4px; }
.login { margin-right: 59px; }
.signup { margin-right: 23px; }

.main-nav { height: 110px; display: flex; padding-left: 48px; gap: 42px; background: #fff; box-shadow: 0 2px 8px rgba(0,0,18,.16); position: relative; }
.nav-item { display: flex; align-items: center; padding: 0 32px 6px; font-size: 28px; letter-spacing: 1.35px; color: #161616; }
.nav-item.active { color: #000091; box-shadow: inset 0 -4px 0 #000091; }
.chev { width: 26px; height: 26px; margin: 0 0 0 22px; fill: #161616; }

.hero { height: 960px; background: #f5f5fe; display: flex; justify-content: space-between; padding: 96px 80px 0; }
.hero-text { width: 1150px; }
h1 { margin: 0 0 48px; font-size: 66px; line-height: 78px; padding-bottom: 4px; font-weight: 800; letter-spacing: 1.2px; color: #161616; }
.hero-text p { font-size: 33px; line-height: 48px; letter-spacing: 1px; color: #3a3a3a; margin-bottom: 48px; }
.hero-text b { color: #3a3a3a; font-weight: 700; }
.cta { display: flex; align-items: center; gap: 41px; }
.btn { height: 80px; width: 482px; background: #000091; color: #f5f5fe; display: flex; align-items: center; justify-content: center; font-size: 33px; font-weight: 500; letter-spacing: 1.15px; }
.more { color: #000091; font-size: 33px; font-weight: 500; letter-spacing: .7px; }

.map { position: relative; width: 1176px; height: 767px; border-radius: 24px; overflow: hidden; box-shadow: 0 0 24px rgba(0,0,145,.06); }
.map-svg { display: block; }
.map-land { fill: #f2f2ef; }
.green { fill: #b8dcb1; stroke: #b8dcb1; stroke-width: 5px; stroke-linejoin: round; vector-effect: non-scaling-stroke; }
.patch { fill: #eeeeea; }
.land-fill { fill: #efefec; }
.roads { filter: drop-shadow(0 0 .7px #a8a8a8); }
.road-major, .road-minor, .rail, .rail-dash, .trail, .nss { fill: none; vector-effect: non-scaling-stroke; }
.road-major { stroke: #fff; stroke-width: 8px; stroke-linejoin: round; }
.road-minor { stroke: #fff; stroke-width: 5px; stroke-linejoin: round; }
.rail { stroke: #b0b0ac; stroke-width: 4px; }
.rail-dash { stroke: #dadad6; stroke-width: 4px; stroke-dasharray: 10 8; }
.trail { stroke: #f4f7f2; stroke-width: 1.5px; stroke-dasharray: 3 3; }
.plaza { fill: #f7f7f5; stroke: #dcdcd8; stroke-width: 1px; vector-effect: non-scaling-stroke; }
.bld { fill: #c9c9c8; stroke: #aaaaa8; stroke-width: 1px; vector-effect: non-scaling-stroke; }
.labels text { font-family: "Noto Sans", sans-serif; font-size: 13px; fill: #333; text-anchor: middle; dominant-baseline: middle; paint-order: stroke; stroke: #fff; stroke-width: 1.5px; }
.under-edge { stroke: #b4b4b2; stroke-width: 18.5px; fill: none; stroke-linecap: square; }
.under { stroke: #c9c9c8; stroke-width: 17px; fill: none; stroke-linecap: square; }
.halo { stroke: #fff; stroke-width: 16px; fill: none; stroke-linecap: round; }
.dot { stroke: #1450dc; stroke-width: 11px; fill: none; stroke-linecap: round; }

.search { position: absolute; left: 40px; top: 648px; width: 1096px; height: 80px; display: flex; }
.search-input { flex: 1; min-width: 0; height: 80px; border: 0; border-bottom: 4px solid #000091; border-radius: 0; background: #eee; padding: 3px 32px 0; font: italic 33px Lato, sans-serif; letter-spacing: 1.45px; outline: 0; }
.search-input::placeholder { color: #666; opacity: 1; }
.search-btn { width: 80px; height: 80px; background: #000091; display: flex; align-items: center; justify-content: center; }
.search-ico { width: 48px; height: 48px; fill: #fff; }

.band { padding: 112px 80px 0; }
.band-card { height: 420px; border-radius: 32px; background: linear-gradient(100deg, #0073e6 0%, #00208a 100%); }
```
